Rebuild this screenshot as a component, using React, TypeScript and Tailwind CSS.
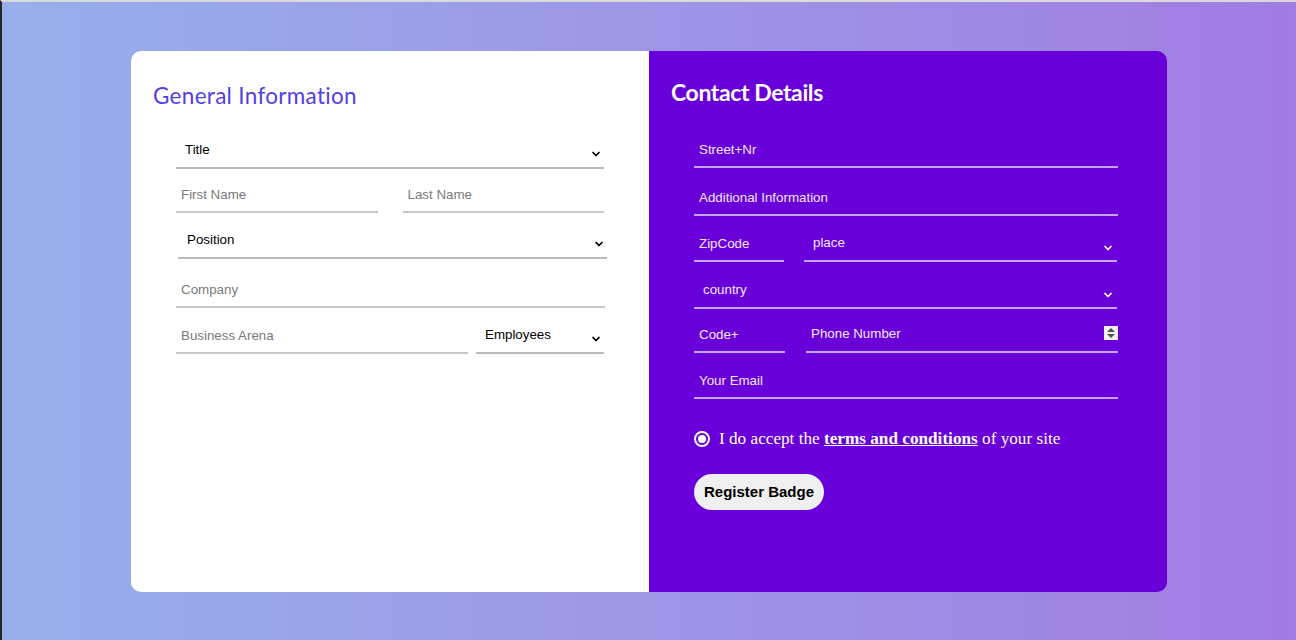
import React from 'react';
import { ChevronDown } from 'lucide-react';

const Chevron = ({ light }: { light?: boolean }) => (
  <ChevronDown size={12} strokeWidth={3.5} className={light ? 'text-white' : 'text-black'} />
);

const LeftInput = ({ placeholder, className = '' }: { placeholder: string; className?: string }) => (
  <input
    placeholder={placeholder}
    className={`h-[38px] border-b-2 border-[#c9c5c9] bg-transparent px-[5px] pt-[2px] text-[13.33px] text-black placeholder:text-[#7a7a7a] outline-none ${className}`}
  />
);

const LeftSelect = ({ label, className = '' }: { label: string; className?: string }) => (
  <div className={`flex h-[38px] justify-between border-b-2 border-[#bdbabd] pl-[9px] pr-[2px] pt-[2px] ${className}`}>
    <span className="self-center text-[13.33px] text-black">{label}</span>
    <span className="mb-[7px] self-end"><Chevron /></span>
  </div>
);

const RightInput = ({ placeholder, className = '' }: { placeholder: string; className?: string }) => (
  <input
    placeholder={placeholder}
    className={`h-[38px] border-b-2 border-[#c2a6f2] bg-transparent px-[5px] pt-[2px] text-[13.33px] text-white placeholder:text-[#f0e8fc] outline-none ${className}`}
  />
);

const RightSelect = ({ label, className = '' }: { label: string; className?: string }) => (
  <div className={`flex h-[38px] justify-between border-b-2 border-[#c2a6f2] pl-[9px] pr-[3px] pt-[2px] ${className}`}>
    <span className="self-center text-[13.33px] text-[#f0e8fc]">{label}</span>
    <span className="mb-[6px] self-end"><Chevron light /></span>
  </div>
);

export default function App() {
  return (
    <div className="h-[640px] border-l-2 border-t-2 border-l-[#262626] border-t-[#dadada] bg-gradient-to-r from-[#96afec] to-[#a17ce2] pt-[49px] font-['Liberation_Sans',Arial,sans-serif]">
      <div className="mx-auto flex h-[541px] w-[1036px] overflow-hidden rounded-[10px]">
        {/* General information */}
        <div className="w-[518px] bg-white pl-[22px] pt-[29px]">
          <h2 className="h-[32px] font-['Lato',sans-serif] text-[22.5px] leading-[32px] tracking-[0.3px] text-[#5140e6]">
            General Information
          </h2>
          <div className="mt-[19px] flex w-[451px] flex-col pl-[23px]">
            <LeftSelect label="Title" className="w-[428px]" />
            <div className="mt-[6px] flex gap-[25px]">
              <LeftInput placeholder="First Name" className="w-[202px]" />
              <LeftInput placeholder="Last Name" className="w-[202px]" />
            </div>
            <LeftSelect label="Position" className="ml-[2px] mt-[8px] w-[429px]" />
            <LeftInput placeholder="Company" className="mt-[11px] w-[429px]" />
            <div className="mt-[8px] flex gap-[8px]">
              <LeftInput placeholder="Business Arena" className="w-[292px]" />
              <LeftSelect label="Employees" className="w-[128px]" />
            </div>
          </div>
        </div>

        {/* Contact details */}
        <div className="w-[518px] bg-[#6a00d9] pl-[22px] pt-[25px]">
          <h2 className="h-[32px] font-['Lato',sans-serif] text-[23px] font-bold leading-[32px] tracking-[-0.4px] text-white">
            Contact Details
          </h2>
          <div className="mt-[22px] flex w-[447px] flex-col pl-[23px]">
            <RightInput placeholder="Street+Nr" className="w-[424px]" />
            <RightInput placeholder="Additional Information" className="mt-[10px] w-[424px]" />
            <div className="mt-[8px] flex gap-[20px]">
              <RightInput placeholder="ZipCode" className="w-[90px]" />
              <RightSelect label="place" className="w-[313px]" />
            </div>
            <RightSelect label="country" className="mt-[9px] w-[423px]" />
            <div className="mt-[6px] flex gap-[21px]">
              <RightInput placeholder="Code+" className="w-[91px]" />
              <div className="flex h-[38px] w-[312px] items-center justify-between border-b-2 border-[#c2a6f2] pl-[5px] pt-[2px]">
                <span className="text-[13.33px] text-[#f0e8fc]">Phone Number</span>
                <span className="mt-[-3px] flex h-[14px] w-[14px] flex-col items-center justify-center gap-[2px] bg-[#efefef]">
                  <svg width="8" height="4" viewBox="0 0 8 4"><path d="M0 4 L4 0 L8 4 Z" fill="#505050" /></svg>
                  <svg width="8" height="4" viewBox="0 0 8 4"><path d="M0 0 L4 4 L8 0 Z" fill="#505050" /></svg>
                </span>
              </div>
            </div>
            <RightInput placeholder="Your Email" className="mt-[8px] w-[424px]" />

            <label className="mt-[27px] flex items-center gap-[9px] font-['Liberation_Serif','Times_New_Roman',serif] text-[17.2px] text-white">
              <span className="flex h-[16px] w-[16px] items-center justify-center rounded-full border-2 border-white">
                <span className="h-[8px] w-[8px] rounded-full bg-white" />
              </span>
              <span>
                I do accept the <a href="#" className="font-bold underline">terms and conditions</a> of your site
              </span>
            </label>

            <button className="mt-[22px] h-[36px] w-[130px] rounded-full bg-[#efefef] text-[15px] font-bold text-black">
              Register Badge
            </button>
          </div>
        </div>
      </div>
    </div>
  );
}
